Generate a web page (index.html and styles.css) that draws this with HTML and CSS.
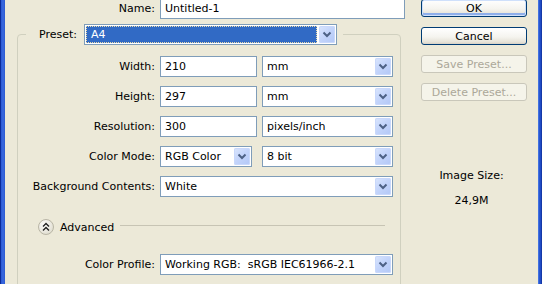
FILE: index.html
```html
<!DOCTYPE html>
<html>
<head>
<meta charset="utf-8">
<title>New</title>
<link rel="stylesheet" href="styles.css">
</head>
<body>
<div class="window">
  <div class="frame-left"></div>
  <div class="content">
    <div class="form">
      <div class="row name-row">
        <span class="lbl">Name:</span>
        <div class="textbox name-box">Untitled-1</div>
      </div>
      <fieldset class="group">
        <legend class="legend">
          <span class="legend-lbl">Preset:</span>
          <div class="combo preset-combo">
            <span class="combo-text selected"><span class="focus">A4</span></span>
            <span class="drop"><svg width="16" height="17" viewBox="0 0 16 17"><polyline points="4.5,6.5 8,10 11.5,6.5" fill="none" stroke="#4d6185" stroke-width="2"/></svg></span>
          </div>
        </legend>
        <div class="rows">
          <div class="row">
            <span class="lbl">Width:</span>
            <div class="textbox num">210</div>
            <div class="combo unit"><span class="combo-text">mm</span><span class="drop"><svg width="16" height="17" viewBox="0 0 16 17"><polyline points="4.5,6.5 8,10 11.5,6.5" fill="none" stroke="#4d6185" stroke-width="2"/></svg></span></div>
          </div>
          <div class="row">
            <span class="lbl">Height:</span>
            <div class="textbox num">297</div>
            <div class="combo unit"><span class="combo-text">mm</span><span class="drop"><svg width="16" height="17" viewBox="0 0 16 17"><polyline points="4.5,6.5 8,10 11.5,6.5" fill="none" stroke="#4d6185" stroke-width="2"/></svg></span></div>
          </div>
          <div class="row">
            <span class="lbl">Resolution:</span>
            <div class="textbox num">300</div>
            <div class="combo unit"><span class="combo-text">pixels/inch</span><span class="drop"><svg width="16" height="17" viewBox="0 0 16 17"><polyline points="4.5,6.5 8,10 11.5,6.5" fill="none" stroke="#4d6185" stroke-width="2"/></svg></span></div>
          </div>
          <div class="row">
            <span class="lbl">Color Mode:</span>
            <div class="combo mode"><span class="combo-text">RGB Color</span><span class="drop"><svg width="16" height="17" viewBox="0 0 16 17"><polyline points="4.5,6.5 8,10 11.5,6.5" fill="none" stroke="#4d6185" stroke-width="2"/></svg></span></div>
            <div class="combo unit"><span class="combo-text">8 bit</span><span class="drop"><svg width="16" height="17" viewBox="0 0 16 17"><polyline points="4.5,6.5 8,10 11.5,6.5" fill="none" stroke="#4d6185" stroke-width="2"/></svg></span></div>
          </div>
          <div class="row">
            <span class="lbl">Background Contents:</span>
            <div class="combo wide"><span class="combo-text">White</span><span class="drop"><svg width="16" height="17" viewBox="0 0 16 17"><polyline points="4.5,6.5 8,10 11.5,6.5" fill="none" stroke="#4d6185" stroke-width="2"/></svg></span></div>
          </div>
        </div>
        <div class="advanced">
          <svg class="adv-icon" width="16" height="16" viewBox="0 0 16 16">
            <defs>
              <radialGradient id="g" cx="0.4" cy="0.35" r="0.7">
                <stop offset="0" stop-color="#ffffff"/>
                <stop offset="1" stop-color="#dedbcc"/>
              </radialGradient>
            </defs>
            <circle cx="8" cy="8" r="7.5" fill="url(#g)" stroke="#b9b6a6"/>
            <polyline points="5,7.5 8,4.5 11,7.5" fill="none" stroke="#222" stroke-width="1.4"/>
            <polyline points="5,11.5 8,8.5 11,11.5" fill="none" stroke="#222" stroke-width="1.4"/>
          </svg>
          <span class="adv-text">Advanced</span>
          <span class="adv-line"></span>
        </div>
        <div class="row profile-row">
          <span class="lbl">Color Profile:</span>
          <div class="combo wide"><span class="combo-text">Working RGB:&nbsp; sRGB IEC61966-2.1</span><span class="drop"><svg width="16" height="17" viewBox="0 0 16 17"><polyline points="4.5,6.5 8,10 11.5,6.5" fill="none" stroke="#4d6185" stroke-width="2"/></svg></span></div>
        </div>
      </fieldset>
    </div>
    <div class="side">
      <div class="buttons">
        <div class="btn default">OK</div>
        <div class="btn">Cancel</div>
        <div class="btn disabled">Save Preset...</div>
        <div class="btn disabled">Delete Preset...</div>
      </div>
      <div class="info">
        <div class="info-label">Image Size:</div>
        <div class="info-value">24,9M</div>
      </div>
    </div>
  </div>
  <div class="frame-right"></div>
</div>
</body>
</html>
```

FILE: styles.css
```css
html, body {
  margin: 0;
  padding: 0;
  background: #ece9d8;
}

body {
  font-family: "DejaVu Sans", "Liberation Sans", sans-serif;
  font-size: 11px;
  line-height: 13px;
  color: #000;
}

.window {
  display: flex;
  width: 542px;
  height: 284px;
  overflow: hidden;
  background: #ece9d8;
}

.frame-left {
  flex: none;
  width: 5px;
  background: linear-gradient(to right, #0b2a9a 0, #0b2a9a 1px, #2a58d4 1px, #3a69de 3px, #2c5ad2 5px);
}

.frame-right {
  flex: none;
  width: 4px;
  background: linear-gradient(to right, #5a88ec 0, #2b5ad4 1px, #1d47c0 3px, #0c2a8e 4px);
}

.content {
  flex: 1;
  display: flex;
}

.form {
  flex: none;
  width: 400px;
  margin-top: -2px;
}

.row {
  display: flex;
  align-items: center;
  gap: 5px;
}

.lbl {
  flex: none;
  text-align: right;
  white-space: nowrap;
}

.name-row .lbl {
  width: 150px;
}

.textbox {
  box-sizing: border-box;
  height: 21px;
  border: 1px solid #7f9db9;
  background: #fff;
  padding: 0 4px;
  display: flex;
  align-items: center;
  white-space: nowrap;
}

.name-box {
  width: 245px;
}

.num {
  width: 97px;
}

/* Group box */
.group {
  box-sizing: border-box;
  width: 384px;
  height: 320px;
  margin: 5px 0 0 12px;
  padding: 0;
  border: 1px solid #d0d0bf;
  border-radius: 4px;
}

.legend {
  display: flex;
  align-items: center;
  gap: 7px;
  margin-left: 8px;
  padding: 0 6px 0 13px;
}

.group .lbl {
  width: 137px;
}

.rows {
  display: flex;
  flex-direction: column;
  gap: 9px;
  padding-top: 11px;
}

/* Combo boxes */
.combo {
  box-sizing: border-box;
  height: 21px;
  border: 1px solid #7f9db9;
  background: #fff;
  display: flex;
  align-items: stretch;
  white-space: nowrap;
}

.combo-text {
  flex: 1;
  display: flex;
  align-items: center;
  padding-left: 4px;
  overflow: hidden;
}

.drop {
  flex: none;
  width: 16px;
  margin: 1px;
  border-radius: 2px;
  background: linear-gradient(135deg, #dbe6fd 0%, #c4d5fb 45%, #b2c7f6 100%);
  box-shadow: inset 0 0 0 1px #c9d8fb;
  display: flex;
}

.preset-combo {
  width: 253px;
}

.preset-combo .combo-text {
  padding-left: 0;
}

.selected {
  margin: 1px;
  background: #316ac5;
  color: #fff;
}

.focus {
  flex: 1;
  align-self: stretch;
  display: flex;
  align-items: center;
  padding-left: 4px;
  border: 1px dotted #e8d9a8;
}

.unit {
  width: 131px;
}

.mode {
  width: 92px;
  margin-right: 5px;
}

.wide {
  width: 233px;
}

/* Advanced */
.advanced {
  display: flex;
  align-items: center;
  height: 16px;
  margin-top: 22px;
  padding-left: 20px;
}

.adv-icon {
  flex: none;
}

.adv-text {
  margin-left: 6px;
}

.adv-line {
  flex: 1;
  height: 0;
  border-top: 1px solid #c7c4b4;
  margin: 0 15px 3px 6px;
}

.profile-row {
  margin-top: 19px;
}

/* Right side */
.side {
  flex: 1;
  display: flex;
  flex-direction: column;
}

.buttons {
  display: flex;
  flex-direction: column;
  gap: 10px;
  padding-left: 16px;
  margin-top: -1px;
}

.btn {
  box-sizing: border-box;
  width: 106px;
  height: 18px;
  border: 1px solid #003c74;
  border-radius: 3px;
  background: linear-gradient(#ffffff, #f5f4ef 55%, #e6e3d8 88%, #d6d0c5);
  display: flex;
  align-items: center;
  justify-content: center;
  white-space: nowrap;
}

.btn.default {
  box-shadow: inset 0 0 0 1px #cfe0fb, inset 0 -2px 0 1px #8eaeea;
}

.btn.disabled {
  border-color: #c9c7ba;
  background: #f5f4ea;
  color: #aca899;
}

.info {
  text-align: center;
  margin-top: 68px;
}

.info-value {
  margin-top: 12px;
}
```
